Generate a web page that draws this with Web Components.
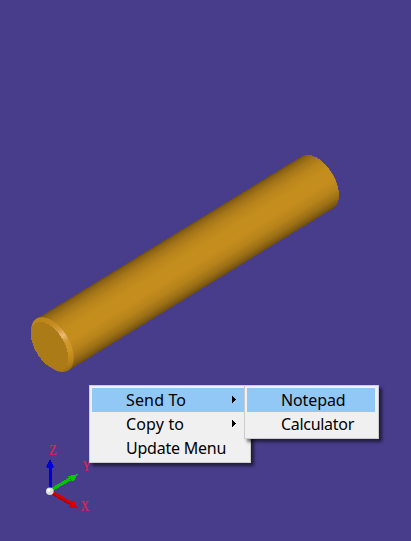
<!DOCTYPE html>
<html lang="en"><head><meta charset="utf-8"><title>Model viewer</title>
<style>html,body{margin:0;height:100%;overflow:hidden;background:#483d8b}</style></head>
<body>
<model-viewport>
  <context-menu style="left:89px;top:385px;width:162px">
    <menu-entry active submenu>Send To</menu-entry>
    <menu-entry submenu>Copy to</menu-entry>
    <menu-entry style="--track:-.22px">Update Menu</menu-entry>
  </context-menu>
  <context-menu style="left:244px;top:385px;width:135px">
    <menu-entry active style="--track:-.12px">Notepad</menu-entry>
    <menu-entry style="--track:-.3px">Calculator</menu-entry>
  </context-menu>
</model-viewport>
<script>
const define=(name,html)=>customElements.define(name,class extends HTMLElement{
  constructor(){super();this.attachShadow({mode:'open'}).innerHTML=html;}
});
define('menu-entry',`<style>
:host{display:flex;align-items:center;box-sizing:border-box;height:24px;padding:0 10px 0 34px;color:#000;font:16px/24px "Noto Sans",sans-serif;white-space:nowrap}
:host([active]){background:#91c8f6}
span{flex:1;letter-spacing:var(--track,.15px)}
svg{display:none;flex:none;width:5px;height:7px;margin-top:-1px}
:host([submenu]) svg{display:block}
</style><span><slot></slot></span><svg viewBox="0 0 5 7" shape-rendering="crispEdges"><path d="M0 0H1V1H2V2H3V3H4V4H3V5H2V6H1V7H0Z"/></svg>`);
define('context-menu',`<style>
:host{position:absolute;display:flex;flex-direction:column;box-sizing:border-box;padding:2px 3px 2px 2px;border:1px solid #ccc;background:#f0f0f0;box-shadow:3px 3px 3px rgba(0,0,0,.55)}
</style><slot></slot>`);
define('pin-model',`<style>:host,svg{display:block;width:411px;height:541px}</style>
<svg viewBox="0 0 411 541" shape-rendering="crispEdges">
<defs>
<linearGradient id="b" gradientUnits="userSpaceOnUse" x1="0" y1="-30.4" x2="0" y2="30.4">
<stop offset="0" stop-color="#6d4d0e"/><stop offset=".04" stop-color="#8b6214"/><stop offset=".13" stop-color="#a57618"/><stop offset=".25" stop-color="#b9841b"/><stop offset=".4" stop-color="#c48e1d"/><stop offset=".6" stop-color="#c48d1d"/><stop offset=".76" stop-color="#b6821a"/><stop offset=".88" stop-color="#9c7016"/><stop offset=".96" stop-color="#805b12"/><stop offset="1" stop-color="#6d4d0f"/></linearGradient>
<linearGradient id="c" gradientUnits="userSpaceOnUse" x1="42" y1="317" x2="71" y2="372">
<stop offset="0" stop-color="#b9841b"/><stop offset=".18" stop-color="#c48c1e"/><stop offset=".31" stop-color="#d29a38"/><stop offset=".42" stop-color="#eabb76"/><stop offset=".52" stop-color="#d09a30"/><stop offset=".7" stop-color="#cc9320"/><stop offset=".84" stop-color="#b9841b"/><stop offset="1" stop-color="#8e6514"/></linearGradient>
<clipPath id="k"><ellipse transform="translate(52.4 344.6) rotate(-31.5)" rx="16.7" ry="30.5"/></clipPath>
</defs>
<ellipse transform="translate(317.4 182.3) rotate(-31.5)" cx="1.2" rx="16.3" ry="28.6" fill="#84600f"/>
<path transform="translate(52.4 344.6) rotate(-31.5)" fill="url(#b)" d="M0-30.4H311.2A16.7 30.4 0 0 1 311.2 30.4H0Z"/>
<rect x="25" y="310" width="60" height="70" fill="url(#c)" clip-path="url(#k)"/>
<path clip-path="url(#k)" d="M30 327L40 322L34 350L31 350Z" fill="#a67616"/>
<ellipse transform="translate(49.6 346) rotate(-31.5)" rx="14.6" ry="26.8" fill="#ab7b17"/>
</svg>`);
define('axis-triad',`<style>:host,svg{display:block;width:60px;height:80px}text{font:14.5px "Liberation Serif",serif;fill:#e51f4c;stroke:#e51f4c;stroke-width:.2px}</style>
<svg viewBox="36 440 60 80">
<g shape-rendering="crispEdges">
<path d="M48.5 466H51.5V489H48.5Z" fill="#0000dc"/><path d="M50 459L54 467Q50 470 46 467Z" fill="#0000dc"/>
<path d="M51 490L70 479" stroke="#00c400" stroke-width="3.4"/><path d="M78 474L73 482L68 476Z" fill="#00cb00"/>
<path d="M51 492L71 503.5" stroke="#d40000" stroke-width="3.8"/><path d="M52 494L69 504" stroke="#a00010"/><path d="M78 508L68.5 508L73 500Z" fill="#d40000"/>
</g><circle cx="49.8" cy="491.3" r="3.8" fill="#ddd"/><circle cx="48.8" cy="490.1" r="1.7" fill="#fff"/>
<text x="49" y="455" textLength="7.5" lengthAdjust="spacingAndGlyphs">Z</text><text x="82.5" y="471" textLength="7.8" lengthAdjust="spacingAndGlyphs">Y</text><text x="80.6" y="511" textLength="8.4" lengthAdjust="spacingAndGlyphs">X</text></svg>`);
define('model-viewport',`<style>
:host{display:block;position:relative;width:411px;height:541px;overflow:hidden;background:#483d8b}
axis-triad{position:absolute;left:36px;top:440px}
</style><pin-model></pin-model><axis-triad></axis-triad><slot></slot>`);
</script></body></html>
